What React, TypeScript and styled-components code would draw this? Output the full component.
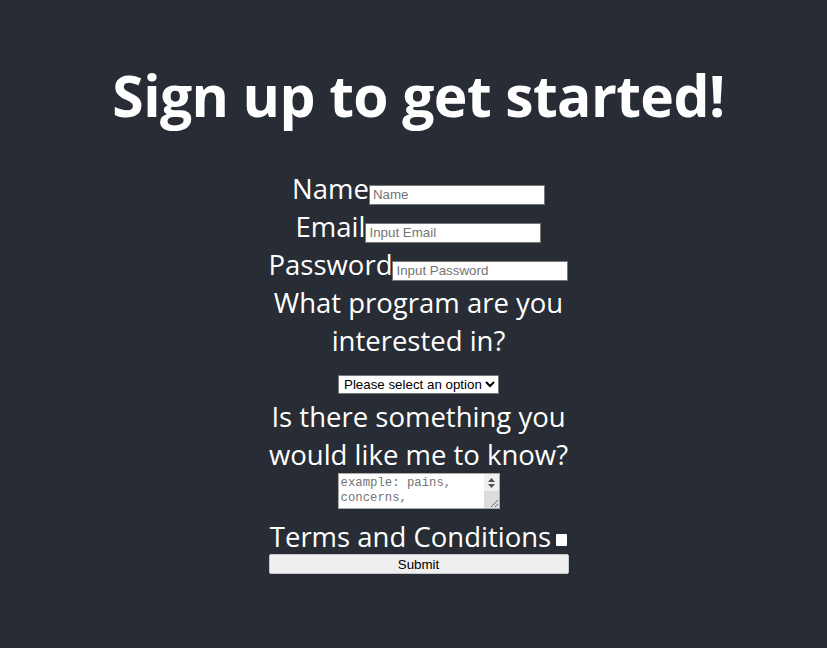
import React from "react";
import styled, { createGlobalStyle } from "styled-components";

const Global = createGlobalStyle`
  html, body { margin: 0; padding: 0; background: #282c34; }
  #root { min-height: 100vh; }
`;

const Page = styled.main`
  min-height: 100vh;
  box-sizing: border-box;
  padding-left: 10px;
  display: flex;
  flex-direction: column;
  align-items: center;
  color: #ffffff;
  font-family: "Open Sans", "Noto Sans", sans-serif;
`;

const Title = styled.h1`
  margin: 59px 0 39px;
  font-size: 57px;
  line-height: 72px;
  font-weight: 700;
  letter-spacing: -0.6px;
  white-space: nowrap;
`;

const Form = styled.form`
  width: 300px;
  text-align: center;
  font-size: 27.5px;
  line-height: 38px;
`;

const Line = styled.div`
  white-space: nowrap;
`;

const Block = styled.div``;

const Label = styled.label``;

const TextInput = styled.input`
  box-sizing: border-box;
  width: 176px;
  height: 20px;
  padding: 1px 3px;
  border: 1px solid #767676;
  background: #fff;
  font: 13.33px "Liberation Sans", Arial, sans-serif;
  color: #000;
  vertical-align: baseline;
  &::placeholder { color: #757575; }
`;

const Select = styled.select`
  box-sizing: border-box;
  width: 161px;
  height: 19px;
  border: 1px solid #767676;
  border-radius: 0;
  background: #fff;
  color: #000;
  font: 13.33px "Liberation Sans", Arial, sans-serif;
  padding: 0 0 0 1px;
`;

const NotesBox = styled.span`
  position: relative;
  display: inline-block;
  width: 162px;
  height: 36px;
  margin: -1px 0 9px;
  vertical-align: top;
`;

const TextArea = styled.textarea`
  box-sizing: border-box;
  display: block;
  width: 162px;
  height: 36px;
  margin: 0;
  padding: 2px 17px 1px 2px;
  border: 1px solid #a9a9a9;
  background: #fff;
  font: 12.3px "Liberation Mono", "DejaVu Sans Mono", monospace;
  line-height: 15px;
  overflow: hidden;
  resize: none;
  &::placeholder { color: #757575; }
`;

const ScrollRail = styled.span`
  position: absolute;
  top: 1px;
  right: 1px;
  bottom: 1px;
  width: 15px;
  display: flex;
  flex-direction: column;
  background: #dcdcdc;
  pointer-events: none;
`;

const ScrollButtons = styled.span`
  display: flex;
  flex-direction: column;
  align-items: center;
  justify-content: center;
  gap: 2px;
  height: 17px;
  background: #f0f0f0;
`;

const ResizeGrip = styled.svg`
  position: absolute;
  right: 2px;
  bottom: 2px;
  pointer-events: none;
`;

const Check = styled.input`
  appearance: none;
  width: 11px;
  height: 12px;
  margin: 0 0 0 5px;
  background: #fff;
  border: none;
  border-radius: 1px;
  vertical-align: 1px;
`;

const Submit = styled.button`
  display: block;
  box-sizing: border-box;
  width: 300px;
  height: 20px;
  margin: -2px 0 0;
  padding: 0;
  background: #efefef;
  border: 1px solid #c8c8c8;
  border-radius: 2px;
  color: #000;
  font: 13.33px "Liberation Sans", Arial, sans-serif;
`;

export default function App() {
  return (
    <>
      <Global />
      <Page>
        <Title>Sign up to get started!</Title>
        <Form onSubmit={(e) => e.preventDefault()}>
          <Line>
            <Label htmlFor="name">Name</Label>
            <TextInput id="name" type="text" placeholder="Name" />
          </Line>
          <Line>
            <Label htmlFor="email">Email</Label>
            <TextInput id="email" type="email" placeholder="Input Email" />
          </Line>
          <Line>
            <Label htmlFor="password">Password</Label>
            <TextInput id="password" type="password" placeholder="Input Password" />
          </Line>
          <Block>
            <Label htmlFor="program">What program are you interested in?</Label>
          </Block>
          <Block>
            <Select id="program" defaultValue="">
              <option value="">Please select an option</option>
              <option value="a">Program A</option>
              <option value="b">Program B</option>
            </Select>
          </Block>
          <Block>
            <Label htmlFor="notes">Is there something you would like me to know?</Label>
          </Block>
          <Block>
            <NotesBox>
              <TextArea id="notes" placeholder="example: pains, concerns, " />
              <ScrollRail>
                <ScrollButtons>
                  <svg width="7" height="4" viewBox="0 0 7 4"><path d="M0 4 L3.5 0 L7 4 Z" fill="#505050" /></svg>
                  <svg width="7" height="4" viewBox="0 0 7 4"><path d="M0 0 L3.5 4 L7 0 Z" fill="#505050" /></svg>
                </ScrollButtons>
              </ScrollRail>
              <ResizeGrip width="8" height="8" viewBox="0 0 8 8">
                <path d="M8 1 L1 8 M8 5 L5 8" stroke="#6a6a6a" strokeWidth="1" />
              </ResizeGrip>
            </NotesBox>
          </Block>
          <Line>
            <Label htmlFor="terms">Terms and Conditions</Label>
            <Check id="terms" type="checkbox" />
          </Line>
          <Submit type="submit">Submit</Submit>
        </Form>
      </Page>
    </>
  );
}
